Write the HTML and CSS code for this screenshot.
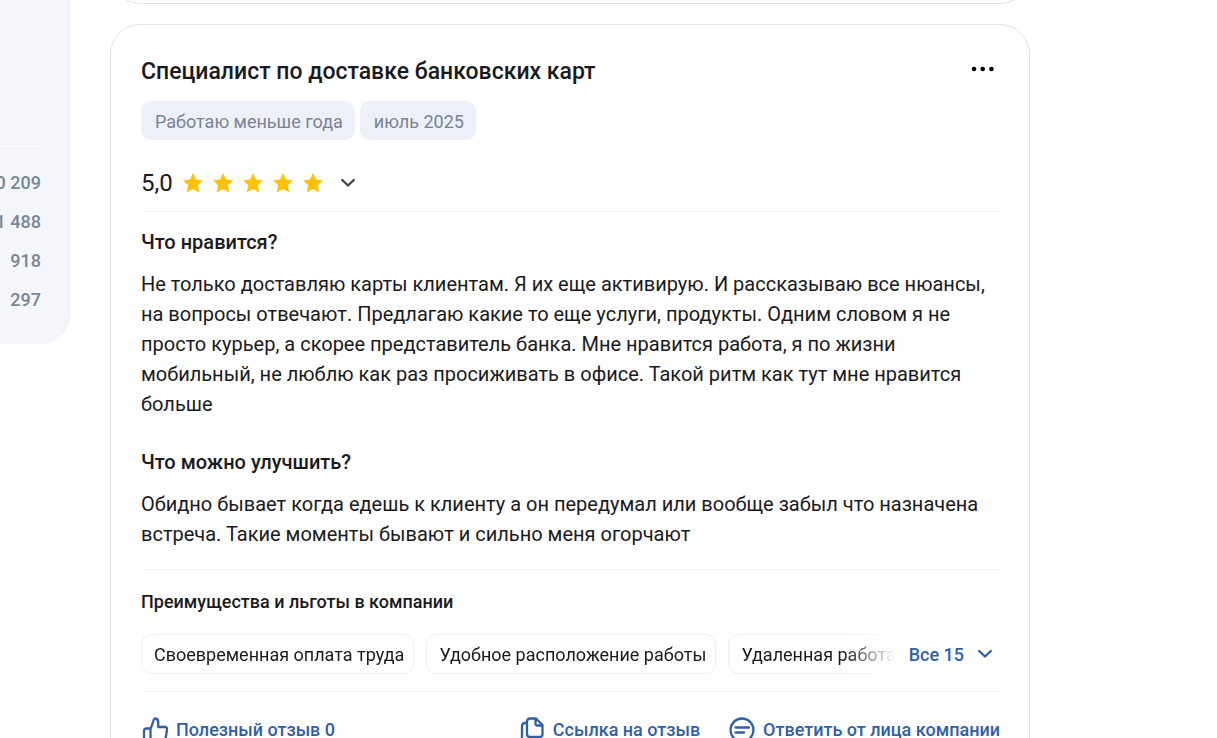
FILE: index.html
```html
<!DOCTYPE html>
<html lang="ru">
<head>
<meta charset="utf-8">
<meta name="viewport" content="width=device-width, initial-scale=1">
<title>Отзыв о работе</title>
<link rel="stylesheet" href="styles.css">
</head>
<body>
<svg class="sprite" aria-hidden="true">
  <symbol id="star" viewBox="0 0 20 20"><path d="M10 0l3 6.600 7 .8-5.200 4.900 1.500 7.200L10 15.900l-6.300 3.600 1.500-7.200L0 7.400l7-.8z"/></symbol>
  <symbol id="chevron" viewBox="0 0 16 10"><path d="M2.200 2L8 7.500 13.800 2" fill="none" stroke="currentColor" stroke-width="2.400" stroke-linecap="round" stroke-linejoin="round"/></symbol>
</svg>
<div class="page">
  <aside class="sidebar">
    <ul class="stats">
      <li>10 209</li>
      <li>1 488</li>
      <li>918</li>
      <li>297</li>
    </ul>
  </aside>
  <main class="reviews">
    <div class="card card-previous"></div>
    <article class="card review">
      <header class="review-header">
        <h2 class="review-title">Специалист по доставке банковских карт</h2>
        <button class="menu" type="button" aria-label="Меню">
          <svg width="24" height="6" viewBox="0 0 24 6"><circle cx="3" cy="3" r="2.300"/><circle cx="11.700" cy="3" r="2.300"/><circle cx="20.400" cy="3" r="2.300"/></svg>
        </button>
      </header>
      <div class="tags">
        <span class="tag">Работаю меньше года</span>
        <span class="tag">июль 2025</span>
      </div>
      <div class="rating">
        <span class="score">5,0</span>
        <span class="stars">
          <svg><use href="#star"/></svg>
          <svg><use href="#star"/></svg>
          <svg><use href="#star"/></svg>
          <svg><use href="#star"/></svg>
          <svg><use href="#star"/></svg>
        </span>
        <button class="expand" type="button" aria-label="Подробнее"><svg class="chevron"><use href="#chevron"/></svg></button>
      </div>
      <section class="answer">
        <h3 class="question">Что нравится?</h3>
        <p class="text">Не только доставляю карты клиентам. Я их еще активирую. И рассказываю все нюансы, на вопросы отвечают. Предлагаю какие то еще услуги, продукты. Одним словом я не просто курьер, а скорее представитель банка. Мне нравится работа, я по жизни мобильный, не люблю как раз просиживать в офисе. Такой ритм как тут мне нравится больше</p>
      </section>
      <section class="answer">
        <h3 class="question">Что можно улучшить?</h3>
        <p class="text">Обидно бывает когда едешь к клиенту а он передумал или вообще забыл что назначена встреча. Такие моменты бывают и сильно меня огорчают</p>
      </section>
      <section class="benefits">
        <h4 class="benefits-title">Преимущества и льготы в компании</h4>
        <div class="benefits-row">
          <div class="benefits-list">
            <span class="benefit">Своевременная оплата труда</span>
            <span class="benefit">Удобное расположение работы</span>
            <span class="benefit">Удаленная работа</span>
          </div>
          <button class="show-all" type="button">Все 15 <svg class="chevron"><use href="#chevron"/></svg></button>
        </div>
      </section>
      <footer class="actions">
        <button class="action action-useful" type="button">
          <svg class="icon" viewBox="0 0 26 26"><path d="M8.500 24V11.500M8.500 11.500H4.500Q2 11.500 2 14v8q0 2 2 2h17q2 0 2.500-2L25 13q.5-3-2.500-3h-6.300V5q0-3-2.700-3.500-1.200-.2-1.600 1L9.500 9.500z"/></svg>
          Полезный отзыв 0
        </button>
        <button class="action" type="button">
          <svg class="icon" viewBox="0 0 26 26"><path d="M11 1.500h6l6.500 6.500v9q0 3-3 3H11q-3 0-3-3V4.500q0-3 3-3zM16.500 2v4.500q0 2 2 2H23M7.500 6H6Q3 6 3 9v12q0 3.500 3 3.500h12"/></svg>
          Ссылка на отзыв
        </button>
        <button class="action" type="button">
          <svg class="icon" viewBox="0 0 26 26"><circle cx="13" cy="13" r="11.500"/><path d="M6.500 10.500h13.500M6.500 15.500h8.500"/></svg>
          Ответить от лица компании
        </button>
      </footer>
    </article>
  </main>
</div>
</body>
</html>
```
FILE: styles.css
```css
* { box-sizing: border-box; }
body {
  margin: 0;
  height: 100vh;
  overflow: hidden;
  background: #fff;
  color: #1a1a1c;
  font-family: Roboto, "Open Sans", sans-serif;
}
h2, h3, h4, p, ul { margin: 0; padding: 0; font-weight: 500; }
button {
  padding: 0;
  border: 0;
  background: none;
  font: inherit;
  color: inherit;
  cursor: pointer;
}
svg { display: block; flex: none; }
.sprite { position: absolute; width: 0; height: 0; }
.page {
  display: grid;
  grid-template-columns: 70px minmax(0, 920px);
  column-gap: 40px;
  align-items: start;
}
.sidebar {
  padding: 146px 28px 32px 0;
  border-right: 1px solid #ecedf2;
  border-radius: 0 0 30px 0;
  background: #f4f6fc;
}
.stats {
  display: flex;
  flex-direction: column;
  align-items: flex-end;
  gap: 15px;
  padding-top: 24px;
  border-top: 1px solid #fff;
  list-style: none;
  color: #798593;
  font-size: 18px;
  line-height: 24px;
  white-space: nowrap;
}
.card {
  border: 1px solid #dde2ec;
  border-radius: 30px;
}
.card-previous {
  height: 60px;
  margin: -56px 0 20px;
}
.review { padding: 31px 29px 30px 30px; }
.review-header {
  display: flex;
  justify-content: space-between;
  align-items: flex-start;
}
.review-title { font-size: 23px; line-height: 32px; }
.menu { padding: 10px 5px; }
.tags { display: flex; gap: 5px; margin-top: 13px; }
.tag {
  padding: 9px 12px 6px 14px;
  border-radius: 10px;
  background: #edf0f9;
  color: #788494;
  font-size: 18px;
  line-height: 24px;
}
.rating {
  display: flex;
  align-items: center;
  padding: 28px 0 13px;
  border-bottom: 1px solid #f3f4f7;
  line-height: 30px;
}
.score { font-size: 24px; }
.stars { display: flex; gap: 10px; margin-left: 10px; color: #ffc107; }
.stars svg { width: 20px; height: 20px; fill: currentColor; }
.expand { margin-left: 17px; color: #424248; }
.chevron { width: 16px; height: 10px; }
.answer { margin-top: 15px; }
.answer + .answer { margin-top: 28px; }
.question { font-size: 20px; line-height: 30px; }
.text {
  margin-top: 12px;
  font-size: 20px;
  font-weight: 400;
  line-height: 30px;
}
.benefits {
  margin-top: 20px;
  padding: 20px 0 17px;
  border: solid #f3f4f7;
  border-width: 1px 0;
}
.benefits-title { font-size: 18px; line-height: 24px; }
.benefits-row { display: flex; align-items: center; margin-top: 20px; }
.benefits-list {
  display: flex;
  flex: 1;
  gap: 12px;
  min-width: 0;
  overflow: hidden;
  mask-image: linear-gradient(to left, transparent, #000 50px);
}
.benefit {
  flex: none;
  padding: 8px 9px 6px 12px;
  border: 1px solid #edeef7;
  border-radius: 10px;
  font-size: 18px;
  line-height: 24px;
}
.show-all {
  display: flex;
  align-items: center;
  gap: 13px;
  padding: 0 7px 0 14px;
  color: #315fa7;
  font-size: 18px;
  font-weight: 500;
}
.actions {
  display: flex;
  gap: 29px;
  padding-top: 23px;
}
.action {
  display: flex;
  align-items: center;
  gap: 8px;
  color: #315fa7;
  font-size: 18px;
  font-weight: 500;
  line-height: 30px;
  white-space: nowrap;
}
.action-useful { margin-right: auto; padding-left: 1px; }
.icon {
  width: 26px;
  height: 26px;
  fill: none;
  stroke: currentColor;
  stroke-width: 2.300;
  stroke-linecap: round;
  stroke-linejoin: round;
}
```
